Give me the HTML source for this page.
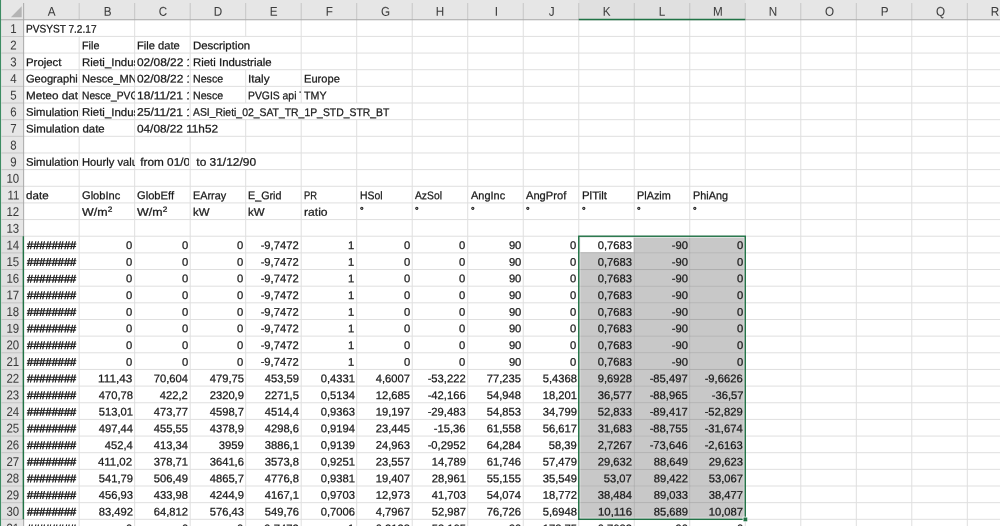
<!DOCTYPE html>
<html><head><meta charset="utf-8"><title>sheet</title>
<style>
html,body{margin:0;padding:0;background:#fff}
body{width:1000px;height:526px;overflow:hidden;position:relative;font-family:"Liberation Sans",sans-serif;font-size:11.1px;color:#181818;-webkit-text-stroke:0.25px #181818}
#g{position:absolute;left:0;top:0}
#t{position:absolute;left:0;top:0;width:1000px;height:526px;overflow:hidden;filter:blur(0.35px)}
.c{position:absolute;height:21px;line-height:17px;box-sizing:border-box;padding:0 2.2px 0 3.2px;white-space:pre;overflow:hidden}
.c span{display:inline-block;transform-origin:0 50%}
.c b{font-weight:normal;font-size:7.4px;position:relative;top:-3.6px;left:0.3px}
.r{text-align:right}
.r span{transform-origin:100% 50%}
.ch{position:absolute;top:0;height:20px;line-height:20px;text-align:center;color:#3c3c3c;font-size:12.7px;-webkit-text-stroke:0.05px #3c3c3c}
.rh{position:absolute;left:0;width:23.65px;height:21px;line-height:17px;text-align:center;color:#3c3c3c;font-size:12.7px;-webkit-text-stroke:0.05px #3c3c3c;padding-left:0.8px;box-sizing:border-box}
.ch span,.rh span{display:inline-block}
</style></head><body>
<svg id="g" width="1000" height="526" viewBox="0 0 1000 526">
<rect x="0" y="0" width="1000" height="19.75" fill="#e6e6e6"/>
<rect x="0" y="0" width="23.65" height="526" fill="#e6e6e6"/>
<rect x="578.75" y="0" width="166.53" height="19.75" fill="#e0e0e0"/>
<rect x="0" y="236.23" width="23.65" height="283.08" fill="#e0e0e0"/>
<rect x="578.75" y="236.23" width="166.53" height="283.08" fill="#c8c8c8"/>
<rect x="580.15" y="237.63" width="53.71" height="14.85" fill="#fff"/>
<line x1="23.65" y1="36.40" x2="1000" y2="36.40" stroke="#dfdfdf"/>
<line x1="23.65" y1="53.05" x2="1000" y2="53.05" stroke="#dfdfdf"/>
<line x1="23.65" y1="69.71" x2="1000" y2="69.71" stroke="#dfdfdf"/>
<line x1="23.65" y1="86.36" x2="1000" y2="86.36" stroke="#dfdfdf"/>
<line x1="23.65" y1="103.01" x2="1000" y2="103.01" stroke="#dfdfdf"/>
<line x1="23.65" y1="119.66" x2="1000" y2="119.66" stroke="#dfdfdf"/>
<line x1="23.65" y1="136.31" x2="1000" y2="136.31" stroke="#dfdfdf"/>
<line x1="23.65" y1="152.97" x2="1000" y2="152.97" stroke="#dfdfdf"/>
<line x1="23.65" y1="169.62" x2="1000" y2="169.62" stroke="#dfdfdf"/>
<line x1="23.65" y1="186.27" x2="1000" y2="186.27" stroke="#dfdfdf"/>
<line x1="23.65" y1="202.92" x2="1000" y2="202.92" stroke="#dfdfdf"/>
<line x1="23.65" y1="219.57" x2="1000" y2="219.57" stroke="#dfdfdf"/>
<line x1="23.65" y1="236.23" x2="1000" y2="236.23" stroke="#dfdfdf"/>
<line x1="23.65" y1="252.88" x2="1000" y2="252.88" stroke="#dfdfdf"/>
<line x1="23.65" y1="269.53" x2="1000" y2="269.53" stroke="#dfdfdf"/>
<line x1="23.65" y1="286.18" x2="1000" y2="286.18" stroke="#dfdfdf"/>
<line x1="23.65" y1="302.83" x2="1000" y2="302.83" stroke="#dfdfdf"/>
<line x1="23.65" y1="319.49" x2="1000" y2="319.49" stroke="#dfdfdf"/>
<line x1="23.65" y1="336.14" x2="1000" y2="336.14" stroke="#dfdfdf"/>
<line x1="23.65" y1="352.79" x2="1000" y2="352.79" stroke="#dfdfdf"/>
<line x1="23.65" y1="369.44" x2="1000" y2="369.44" stroke="#dfdfdf"/>
<line x1="23.65" y1="386.09" x2="1000" y2="386.09" stroke="#dfdfdf"/>
<line x1="23.65" y1="402.75" x2="1000" y2="402.75" stroke="#dfdfdf"/>
<line x1="23.65" y1="419.40" x2="1000" y2="419.40" stroke="#dfdfdf"/>
<line x1="23.65" y1="436.05" x2="1000" y2="436.05" stroke="#dfdfdf"/>
<line x1="23.65" y1="452.70" x2="1000" y2="452.70" stroke="#dfdfdf"/>
<line x1="23.65" y1="469.35" x2="1000" y2="469.35" stroke="#dfdfdf"/>
<line x1="23.65" y1="486.01" x2="1000" y2="486.01" stroke="#dfdfdf"/>
<line x1="23.65" y1="502.66" x2="1000" y2="502.66" stroke="#dfdfdf"/>
<line x1="23.65" y1="519.31" x2="1000" y2="519.31" stroke="#dfdfdf"/>
<line x1="79.16" y1="36.40" x2="79.16" y2="119.66" stroke="#dfdfdf"/>
<line x1="79.16" y1="136.31" x2="79.16" y2="526.00" stroke="#dfdfdf"/>
<line x1="134.67" y1="19.75" x2="134.67" y2="526.00" stroke="#dfdfdf"/>
<line x1="190.18" y1="19.75" x2="190.18" y2="119.66" stroke="#dfdfdf"/>
<line x1="190.18" y1="136.31" x2="190.18" y2="526.00" stroke="#dfdfdf"/>
<line x1="245.69" y1="19.75" x2="245.69" y2="36.40" stroke="#dfdfdf"/>
<line x1="245.69" y1="69.71" x2="245.69" y2="103.01" stroke="#dfdfdf"/>
<line x1="245.69" y1="119.66" x2="245.69" y2="152.97" stroke="#dfdfdf"/>
<line x1="245.69" y1="169.62" x2="245.69" y2="526.00" stroke="#dfdfdf"/>
<line x1="301.20" y1="19.75" x2="301.20" y2="103.01" stroke="#dfdfdf"/>
<line x1="301.20" y1="119.66" x2="301.20" y2="526.00" stroke="#dfdfdf"/>
<line x1="356.71" y1="19.75" x2="356.71" y2="103.01" stroke="#dfdfdf"/>
<line x1="356.71" y1="119.66" x2="356.71" y2="526.00" stroke="#dfdfdf"/>
<line x1="412.22" y1="19.75" x2="412.22" y2="526.00" stroke="#dfdfdf"/>
<line x1="467.73" y1="19.75" x2="467.73" y2="526.00" stroke="#dfdfdf"/>
<line x1="523.24" y1="19.75" x2="523.24" y2="526.00" stroke="#dfdfdf"/>
<line x1="578.75" y1="19.75" x2="578.75" y2="526.00" stroke="#dfdfdf"/>
<line x1="634.26" y1="19.75" x2="634.26" y2="526.00" stroke="#dfdfdf"/>
<line x1="689.77" y1="19.75" x2="689.77" y2="526.00" stroke="#dfdfdf"/>
<line x1="745.28" y1="19.75" x2="745.28" y2="526.00" stroke="#dfdfdf"/>
<line x1="800.79" y1="19.75" x2="800.79" y2="526.00" stroke="#dfdfdf"/>
<line x1="856.30" y1="19.75" x2="856.30" y2="526.00" stroke="#dfdfdf"/>
<line x1="911.81" y1="19.75" x2="911.81" y2="526.00" stroke="#dfdfdf"/>
<line x1="967.32" y1="19.75" x2="967.32" y2="526.00" stroke="#dfdfdf"/>
<line x1="578.75" y1="252.88" x2="745.28" y2="252.88" stroke="#adadad"/>
<line x1="578.75" y1="269.53" x2="745.28" y2="269.53" stroke="#adadad"/>
<line x1="578.75" y1="286.18" x2="745.28" y2="286.18" stroke="#adadad"/>
<line x1="578.75" y1="302.83" x2="745.28" y2="302.83" stroke="#adadad"/>
<line x1="578.75" y1="319.49" x2="745.28" y2="319.49" stroke="#adadad"/>
<line x1="578.75" y1="336.14" x2="745.28" y2="336.14" stroke="#adadad"/>
<line x1="578.75" y1="352.79" x2="745.28" y2="352.79" stroke="#adadad"/>
<line x1="578.75" y1="369.44" x2="745.28" y2="369.44" stroke="#adadad"/>
<line x1="578.75" y1="386.09" x2="745.28" y2="386.09" stroke="#adadad"/>
<line x1="578.75" y1="402.75" x2="745.28" y2="402.75" stroke="#adadad"/>
<line x1="578.75" y1="419.40" x2="745.28" y2="419.40" stroke="#adadad"/>
<line x1="578.75" y1="436.05" x2="745.28" y2="436.05" stroke="#adadad"/>
<line x1="578.75" y1="452.70" x2="745.28" y2="452.70" stroke="#adadad"/>
<line x1="578.75" y1="469.35" x2="745.28" y2="469.35" stroke="#adadad"/>
<line x1="578.75" y1="486.01" x2="745.28" y2="486.01" stroke="#adadad"/>
<line x1="578.75" y1="502.66" x2="745.28" y2="502.66" stroke="#adadad"/>
<line x1="634.26" y1="236.23" x2="634.26" y2="519.31" stroke="#adadad"/>
<line x1="689.77" y1="236.23" x2="689.77" y2="519.31" stroke="#adadad"/>
<line x1="79.16" y1="3" x2="79.16" y2="19.75" stroke="#b0b0b0" stroke-width="0.8" opacity="0.75"/>
<line x1="134.67" y1="3" x2="134.67" y2="19.75" stroke="#b0b0b0" stroke-width="0.8" opacity="0.75"/>
<line x1="190.18" y1="3" x2="190.18" y2="19.75" stroke="#b0b0b0" stroke-width="0.8" opacity="0.75"/>
<line x1="245.69" y1="3" x2="245.69" y2="19.75" stroke="#b0b0b0" stroke-width="0.8" opacity="0.75"/>
<line x1="301.20" y1="3" x2="301.20" y2="19.75" stroke="#b0b0b0" stroke-width="0.8" opacity="0.75"/>
<line x1="356.71" y1="3" x2="356.71" y2="19.75" stroke="#b0b0b0" stroke-width="0.8" opacity="0.75"/>
<line x1="412.22" y1="3" x2="412.22" y2="19.75" stroke="#b0b0b0" stroke-width="0.8" opacity="0.75"/>
<line x1="467.73" y1="3" x2="467.73" y2="19.75" stroke="#b0b0b0" stroke-width="0.8" opacity="0.75"/>
<line x1="523.24" y1="3" x2="523.24" y2="19.75" stroke="#b0b0b0" stroke-width="0.8" opacity="0.75"/>
<line x1="578.75" y1="3" x2="578.75" y2="19.75" stroke="#b0b0b0" stroke-width="0.8" opacity="0.75"/>
<line x1="634.26" y1="3" x2="634.26" y2="19.75" stroke="#b0b0b0" stroke-width="0.8" opacity="0.75"/>
<line x1="689.77" y1="3" x2="689.77" y2="19.75" stroke="#b0b0b0" stroke-width="0.8" opacity="0.75"/>
<line x1="745.28" y1="3" x2="745.28" y2="19.75" stroke="#b0b0b0" stroke-width="0.8" opacity="0.75"/>
<line x1="800.79" y1="3" x2="800.79" y2="19.75" stroke="#b0b0b0" stroke-width="0.8" opacity="0.75"/>
<line x1="856.30" y1="3" x2="856.30" y2="19.75" stroke="#b0b0b0" stroke-width="0.8" opacity="0.75"/>
<line x1="911.81" y1="3" x2="911.81" y2="19.75" stroke="#b0b0b0" stroke-width="0.8" opacity="0.75"/>
<line x1="967.32" y1="3" x2="967.32" y2="19.75" stroke="#b0b0b0" stroke-width="0.8" opacity="0.75"/>
<line x1="1.5" y1="36.40" x2="23.65" y2="36.40" stroke="#b0b0b0" stroke-width="0.8" opacity="0.75"/>
<line x1="1.5" y1="53.05" x2="23.65" y2="53.05" stroke="#b0b0b0" stroke-width="0.8" opacity="0.75"/>
<line x1="1.5" y1="69.71" x2="23.65" y2="69.71" stroke="#b0b0b0" stroke-width="0.8" opacity="0.75"/>
<line x1="1.5" y1="86.36" x2="23.65" y2="86.36" stroke="#b0b0b0" stroke-width="0.8" opacity="0.75"/>
<line x1="1.5" y1="103.01" x2="23.65" y2="103.01" stroke="#b0b0b0" stroke-width="0.8" opacity="0.75"/>
<line x1="1.5" y1="119.66" x2="23.65" y2="119.66" stroke="#b0b0b0" stroke-width="0.8" opacity="0.75"/>
<line x1="1.5" y1="136.31" x2="23.65" y2="136.31" stroke="#b0b0b0" stroke-width="0.8" opacity="0.75"/>
<line x1="1.5" y1="152.97" x2="23.65" y2="152.97" stroke="#b0b0b0" stroke-width="0.8" opacity="0.75"/>
<line x1="1.5" y1="169.62" x2="23.65" y2="169.62" stroke="#b0b0b0" stroke-width="0.8" opacity="0.75"/>
<line x1="1.5" y1="186.27" x2="23.65" y2="186.27" stroke="#b0b0b0" stroke-width="0.8" opacity="0.75"/>
<line x1="1.5" y1="202.92" x2="23.65" y2="202.92" stroke="#b0b0b0" stroke-width="0.8" opacity="0.75"/>
<line x1="1.5" y1="219.57" x2="23.65" y2="219.57" stroke="#b0b0b0" stroke-width="0.8" opacity="0.75"/>
<line x1="1.5" y1="236.23" x2="23.65" y2="236.23" stroke="#b0b0b0" stroke-width="0.8" opacity="0.75"/>
<line x1="1.5" y1="252.88" x2="23.65" y2="252.88" stroke="#b0b0b0" stroke-width="0.8" opacity="0.75"/>
<line x1="1.5" y1="269.53" x2="23.65" y2="269.53" stroke="#b0b0b0" stroke-width="0.8" opacity="0.75"/>
<line x1="1.5" y1="286.18" x2="23.65" y2="286.18" stroke="#b0b0b0" stroke-width="0.8" opacity="0.75"/>
<line x1="1.5" y1="302.83" x2="23.65" y2="302.83" stroke="#b0b0b0" stroke-width="0.8" opacity="0.75"/>
<line x1="1.5" y1="319.49" x2="23.65" y2="319.49" stroke="#b0b0b0" stroke-width="0.8" opacity="0.75"/>
<line x1="1.5" y1="336.14" x2="23.65" y2="336.14" stroke="#b0b0b0" stroke-width="0.8" opacity="0.75"/>
<line x1="1.5" y1="352.79" x2="23.65" y2="352.79" stroke="#b0b0b0" stroke-width="0.8" opacity="0.75"/>
<line x1="1.5" y1="369.44" x2="23.65" y2="369.44" stroke="#b0b0b0" stroke-width="0.8" opacity="0.75"/>
<line x1="1.5" y1="386.09" x2="23.65" y2="386.09" stroke="#b0b0b0" stroke-width="0.8" opacity="0.75"/>
<line x1="1.5" y1="402.75" x2="23.65" y2="402.75" stroke="#b0b0b0" stroke-width="0.8" opacity="0.75"/>
<line x1="1.5" y1="419.40" x2="23.65" y2="419.40" stroke="#b0b0b0" stroke-width="0.8" opacity="0.75"/>
<line x1="1.5" y1="436.05" x2="23.65" y2="436.05" stroke="#b0b0b0" stroke-width="0.8" opacity="0.75"/>
<line x1="1.5" y1="452.70" x2="23.65" y2="452.70" stroke="#b0b0b0" stroke-width="0.8" opacity="0.75"/>
<line x1="1.5" y1="469.35" x2="23.65" y2="469.35" stroke="#b0b0b0" stroke-width="0.8" opacity="0.75"/>
<line x1="1.5" y1="486.01" x2="23.65" y2="486.01" stroke="#b0b0b0" stroke-width="0.8" opacity="0.75"/>
<line x1="1.5" y1="502.66" x2="23.65" y2="502.66" stroke="#b0b0b0" stroke-width="0.8" opacity="0.75"/>
<line x1="1.5" y1="519.31" x2="23.65" y2="519.31" stroke="#b0b0b0" stroke-width="0.8" opacity="0.75"/>
<line x1="0" y1="19.75" x2="1000" y2="19.75" stroke="#a8a8a8"/>
<line x1="23.65" y1="3" x2="23.65" y2="526" stroke="#a8a8a8"/>
<line x1="578.75" y1="19.45" x2="745.28" y2="19.45" stroke="#217346" stroke-width="1.4"/>
<line x1="23.349999999999998" y1="236.23" x2="23.349999999999998" y2="519.31" stroke="#217346" stroke-width="1.4"/>
<rect x="579.95" y="237.43" width="164.13" height="280.68" fill="none" stroke="#fff" stroke-width="0.6" opacity="0.8"/>
<rect x="578.75" y="236.23" width="166.53" height="283.08" fill="none" stroke="#217346" stroke-width="1.4"/>
<rect x="742.68" y="516.71" width="5.2" height="5.2" fill="#fff"/>
<rect x="743.48" y="517.51" width="3.8" height="3.8" fill="#217346"/>
<polygon points="21.7,6.2 21.7,17.3 10.9,17.3" fill="#b4b4b4"/>
<rect x="0" y="0" width="1.05" height="526" fill="#3d8c63"/>
</svg>
<div id="t">
<div class="ch" style="left:23.65px;width:55.51px"><span style="transform:translate(0.5px,1.80px) rotate(0.05deg) scaleX(0.92)">A</span></div>
<div class="ch" style="left:79.16px;width:55.51px"><span style="transform:translate(0.5px,1.80px) rotate(0.05deg) scaleX(0.92)">B</span></div>
<div class="ch" style="left:134.67px;width:55.51px"><span style="transform:translate(0.5px,1.80px) rotate(0.05deg) scaleX(0.92)">C</span></div>
<div class="ch" style="left:190.18px;width:55.51px"><span style="transform:translate(0.5px,1.80px) rotate(0.05deg) scaleX(0.92)">D</span></div>
<div class="ch" style="left:245.69px;width:55.51px"><span style="transform:translate(0.5px,1.80px) rotate(0.05deg) scaleX(0.92)">E</span></div>
<div class="ch" style="left:301.20px;width:55.51px"><span style="transform:translate(0.5px,1.80px) rotate(0.05deg) scaleX(0.92)">F</span></div>
<div class="ch" style="left:356.71px;width:55.51px"><span style="transform:translate(0.5px,1.80px) rotate(0.05deg) scaleX(0.92)">G</span></div>
<div class="ch" style="left:412.22px;width:55.51px"><span style="transform:translate(0.5px,1.80px) rotate(0.05deg) scaleX(0.92)">H</span></div>
<div class="ch" style="left:467.73px;width:55.51px"><span style="transform:translate(0.5px,1.80px) rotate(0.05deg) scaleX(0.92)">I</span></div>
<div class="ch" style="left:523.24px;width:55.51px"><span style="transform:translate(0.5px,1.80px) rotate(0.05deg) scaleX(0.92)">J</span></div>
<div class="ch" style="left:578.75px;width:55.51px"><span style="transform:translate(0.5px,1.80px) rotate(0.05deg) scaleX(0.92)">K</span></div>
<div class="ch" style="left:634.26px;width:55.51px"><span style="transform:translate(0.5px,1.80px) rotate(0.05deg) scaleX(0.92)">L</span></div>
<div class="ch" style="left:689.77px;width:55.51px"><span style="transform:translate(0.5px,1.80px) rotate(0.05deg) scaleX(0.92)">M</span></div>
<div class="ch" style="left:745.28px;width:55.51px"><span style="transform:translate(0.5px,1.80px) rotate(0.05deg) scaleX(0.92)">N</span></div>
<div class="ch" style="left:800.79px;width:55.51px"><span style="transform:translate(0.5px,1.80px) rotate(0.05deg) scaleX(0.92)">O</span></div>
<div class="ch" style="left:856.30px;width:55.51px"><span style="transform:translate(0.5px,1.80px) rotate(0.05deg) scaleX(0.92)">P</span></div>
<div class="ch" style="left:911.81px;width:55.51px"><span style="transform:translate(0.5px,1.80px) rotate(0.05deg) scaleX(0.92)">Q</span></div>
<div class="ch" style="left:967.32px;width:55.51px"><span style="transform:translate(0.5px,1.80px) rotate(0.05deg) scaleX(0.92)">R</span></div>
<div class="rh" style="top:19px"><span style="transform:translate(0.8px,1.95px) rotate(0.05deg) scaleX(0.9)">1</span></div>
<div class="rh" style="top:36px"><span style="transform:translate(0.8px,1.60px) rotate(0.05deg) scaleX(0.9)">2</span></div>
<div class="rh" style="top:53px"><span style="transform:translate(0.8px,1.25px) rotate(0.05deg) scaleX(0.9)">3</span></div>
<div class="rh" style="top:69px"><span style="transform:translate(0.8px,1.91px) rotate(0.05deg) scaleX(0.9)">4</span></div>
<div class="rh" style="top:86px"><span style="transform:translate(0.8px,1.56px) rotate(0.05deg) scaleX(0.9)">5</span></div>
<div class="rh" style="top:103px"><span style="transform:translate(0.8px,1.21px) rotate(0.05deg) scaleX(0.9)">6</span></div>
<div class="rh" style="top:119px"><span style="transform:translate(0.8px,1.86px) rotate(0.05deg) scaleX(0.9)">7</span></div>
<div class="rh" style="top:136px"><span style="transform:translate(0.8px,1.51px) rotate(0.05deg) scaleX(0.9)">8</span></div>
<div class="rh" style="top:152px"><span style="transform:translate(0.8px,2.17px) rotate(0.05deg) scaleX(0.9)">9</span></div>
<div class="rh" style="top:169px"><span style="transform:translate(0.8px,1.82px) rotate(0.05deg) scaleX(0.9)">10</span></div>
<div class="rh" style="top:186px"><span style="transform:translate(0.8px,1.47px) rotate(0.05deg) scaleX(0.9)">11</span></div>
<div class="rh" style="top:202px"><span style="transform:translate(0.8px,2.12px) rotate(0.05deg) scaleX(0.9)">12</span></div>
<div class="rh" style="top:219px"><span style="transform:translate(0.8px,1.77px) rotate(0.05deg) scaleX(0.9)">13</span></div>
<div class="rh" style="top:236px"><span style="transform:translate(0.8px,1.43px) rotate(0.05deg) scaleX(0.9)">14</span></div>
<div class="rh" style="top:252px"><span style="transform:translate(0.8px,2.08px) rotate(0.05deg) scaleX(0.9)">15</span></div>
<div class="rh" style="top:269px"><span style="transform:translate(0.8px,1.73px) rotate(0.05deg) scaleX(0.9)">16</span></div>
<div class="rh" style="top:286px"><span style="transform:translate(0.8px,1.38px) rotate(0.05deg) scaleX(0.9)">17</span></div>
<div class="rh" style="top:302px"><span style="transform:translate(0.8px,2.03px) rotate(0.05deg) scaleX(0.9)">18</span></div>
<div class="rh" style="top:319px"><span style="transform:translate(0.8px,1.69px) rotate(0.05deg) scaleX(0.9)">19</span></div>
<div class="rh" style="top:336px"><span style="transform:translate(0.8px,1.34px) rotate(0.05deg) scaleX(0.9)">20</span></div>
<div class="rh" style="top:352px"><span style="transform:translate(0.8px,1.99px) rotate(0.05deg) scaleX(0.9)">21</span></div>
<div class="rh" style="top:369px"><span style="transform:translate(0.8px,1.64px) rotate(0.05deg) scaleX(0.9)">22</span></div>
<div class="rh" style="top:386px"><span style="transform:translate(0.8px,1.29px) rotate(0.05deg) scaleX(0.9)">23</span></div>
<div class="rh" style="top:402px"><span style="transform:translate(0.8px,1.95px) rotate(0.05deg) scaleX(0.9)">24</span></div>
<div class="rh" style="top:419px"><span style="transform:translate(0.8px,1.60px) rotate(0.05deg) scaleX(0.9)">25</span></div>
<div class="rh" style="top:436px"><span style="transform:translate(0.8px,1.25px) rotate(0.05deg) scaleX(0.9)">26</span></div>
<div class="rh" style="top:452px"><span style="transform:translate(0.8px,1.90px) rotate(0.05deg) scaleX(0.9)">27</span></div>
<div class="rh" style="top:469px"><span style="transform:translate(0.8px,1.55px) rotate(0.05deg) scaleX(0.9)">28</span></div>
<div class="rh" style="top:486px"><span style="transform:translate(0.8px,1.21px) rotate(0.05deg) scaleX(0.9)">29</span></div>
<div class="rh" style="top:502px"><span style="transform:translate(0.8px,1.86px) rotate(0.05deg) scaleX(0.9)">30</span></div>
<div class="rh" style="top:519px"><span style="transform:translate(0.8px,1.51px) rotate(0.05deg) scaleX(0.9)">31</span></div>
<div class="c" style="left:23.05px;top:19px;width:111.02px"><span style="transform:translateY(1.60px) rotate(0.05deg) scaleX(0.9098)">PVSYST 7.2.17</span></div>
<div class="c" style="left:79.16px;top:36px;width:55.51px"><span style="transform:translateY(1.25px) rotate(0.05deg) scaleX(0.9738)">File</span></div>
<div class="c" style="left:134.07px;top:36px;width:54.81px"><span style="transform:translateY(1.25px) rotate(0.05deg) scaleX(1.0051)">File date</span></div>
<div class="c" style="left:190.18px;top:36px;width:111.02px"><span style="transform:translateY(1.25px) rotate(0.05deg) scaleX(1.0296)">Description</span></div>
<div class="c" style="left:23.05px;top:53px;width:55.11px"><span style="transform:translateY(0.90px) rotate(0.05deg) scaleX(1.0280)">Project</span></div>
<div class="c" style="left:79.16px;top:53px;width:55.51px"><span style="transform:translateY(0.90px) rotate(0.05deg) scaleX(1.0309)">Rieti_Industriale</span></div>
<div class="c" style="left:134.07px;top:53px;width:54.81px"><span style="transform:translateY(0.90px) rotate(0.05deg) scaleX(1.0723)">02/08/22 11h</span></div>
<div class="c" style="left:190.18px;top:53px;width:111.02px"><span style="transform:translateY(0.90px) rotate(0.05deg) scaleX(1.0288)">Rieti Industriale</span></div>
<div class="c" style="left:23.05px;top:69px;width:55.11px"><span style="transform:translateY(1.56px) rotate(0.05deg) scaleX(0.9996)">Geographical</span></div>
<div class="c" style="left:79.16px;top:69px;width:55.51px"><span style="transform:translateY(1.56px) rotate(0.05deg) scaleX(0.9999)">Nesce_MN72</span></div>
<div class="c" style="left:134.07px;top:69px;width:54.81px"><span style="transform:translateY(1.56px) rotate(0.05deg) scaleX(1.0723)">02/08/22 11h</span></div>
<div class="c" style="left:190.18px;top:69px;width:55.51px"><span style="transform:translateY(1.56px) rotate(0.05deg) scaleX(0.9596)">Nesce</span></div>
<div class="c" style="left:245.19px;top:69px;width:55.51px"><span style="transform:translateY(1.56px) rotate(0.05deg) scaleX(1.0562)">Italy</span></div>
<div class="c" style="left:301.20px;top:69px;width:55.51px"><span style="transform:translateY(1.56px) rotate(0.05deg) scaleX(1.0009)">Europe</span></div>
<div class="c" style="left:23.05px;top:86px;width:55.11px"><span style="transform:translateY(1.21px) rotate(0.05deg) scaleX(1.0535)">Meteo data</span></div>
<div class="c" style="left:79.16px;top:86px;width:55.51px"><span style="transform:translateY(1.21px) rotate(0.05deg) scaleX(0.9245)">Nesce_PVGIS</span></div>
<div class="c" style="left:134.07px;top:86px;width:54.81px"><span style="transform:translateY(1.21px) rotate(0.05deg) scaleX(1.0863)">18/11/21 11h</span></div>
<div class="c" style="left:190.18px;top:86px;width:55.51px"><span style="transform:translateY(1.21px) rotate(0.05deg) scaleX(0.9596)">Nesce</span></div>
<div class="c" style="left:245.19px;top:86px;width:55.51px"><span style="transform:translateY(1.21px) rotate(0.05deg) scaleX(0.9353)">PVGIS api TMY</span></div>
<div class="c" style="left:301.20px;top:86px;width:55.51px"><span style="transform:translateY(1.21px) rotate(0.05deg) scaleX(0.9605)">TMY</span></div>
<div class="c" style="left:23.05px;top:103px;width:55.11px"><span style="transform:translateY(0.86px) rotate(0.05deg) scaleX(1.0206)">Simulation v</span></div>
<div class="c" style="left:79.16px;top:103px;width:55.51px"><span style="transform:translateY(0.86px) rotate(0.05deg) scaleX(1.0309)">Rieti_Industriale</span></div>
<div class="c" style="left:134.07px;top:103px;width:54.81px"><span style="transform:translateY(0.86px) rotate(0.05deg) scaleX(1.0863)">25/11/21 11h</span></div>
<div class="c" style="left:190.18px;top:103px;width:222.04px"><span style="transform:translateY(0.86px) rotate(0.05deg) scaleX(0.9376)">ASI_Rieti_02_SAT_TR_1P_STD_STR_BT</span></div>
<div class="c" style="left:23.05px;top:119px;width:111.02px"><span style="transform:translateY(1.51px) rotate(0.05deg) scaleX(1.0291)">Simulation date</span></div>
<div class="c" style="left:134.07px;top:119px;width:111.02px"><span style="transform:translateY(1.51px) rotate(0.05deg) scaleX(1.0622)">04/08/22 11h52</span></div>
<div class="c" style="left:23.05px;top:152px;width:55.11px"><span style="transform:translateY(1.82px) rotate(0.05deg) scaleX(1.0206)">Simulation v</span></div>
<div class="c" style="left:79.16px;top:152px;width:55.51px"><span style="transform:translateY(1.82px) rotate(0.05deg) scaleX(1.0073)">Hourly values</span></div>
<div class="c" style="left:134.07px;top:152px;width:54.81px"><span style="transform:translateY(1.82px) rotate(0.05deg) scaleX(1.0616)"> from 01/01</span></div>
<div class="c" style="left:190.18px;top:152px;width:111.02px"><span style="transform:translateY(1.82px) rotate(0.05deg) scaleX(1.0757)"> to 31/12/90</span></div>
<div class="c" style="left:23.05px;top:186px;width:55.11px"><span style="transform:translateY(1.12px) rotate(0.05deg) scaleX(1.0458)">date</span></div>
<div class="c" style="left:79.16px;top:186px;width:55.51px"><span style="transform:translateY(1.12px) rotate(0.05deg) scaleX(1.0010)">GlobInc</span></div>
<div class="c" style="left:134.07px;top:186px;width:54.81px"><span style="transform:translateY(1.12px) rotate(0.05deg) scaleX(1.0062)">GlobEff</span></div>
<div class="c" style="left:190.18px;top:186px;width:55.51px"><span style="transform:translateY(1.12px) rotate(0.05deg) scaleX(0.9774)">EArray</span></div>
<div class="c" style="left:245.19px;top:186px;width:55.51px"><span style="transform:translateY(1.12px) rotate(0.05deg) scaleX(0.9687)">E_Grid</span></div>
<div class="c" style="left:301.20px;top:186px;width:55.51px"><span style="transform:translateY(1.12px) rotate(0.05deg) scaleX(0.8452)">PR</span></div>
<div class="c" style="left:356.71px;top:186px;width:55.51px"><span style="transform:translateY(1.12px) rotate(0.05deg) scaleX(0.9403)">HSol</span></div>
<div class="c" style="left:412.22px;top:186px;width:55.51px"><span style="transform:translateY(1.12px) rotate(0.05deg) scaleX(0.9289)">AzSol</span></div>
<div class="c" style="left:467.73px;top:186px;width:55.51px"><span style="transform:translateY(1.12px) rotate(0.05deg) scaleX(0.9877)">AngInc</span></div>
<div class="c" style="left:523.24px;top:186px;width:55.51px"><span style="transform:translateY(1.12px) rotate(0.05deg) scaleX(1.0036)">AngProf</span></div>
<div class="c" style="left:578.75px;top:186px;width:55.51px"><span style="transform:translateY(1.12px) rotate(0.05deg) scaleX(1.0281)">PlTilt</span></div>
<div class="c" style="left:634.26px;top:186px;width:55.51px"><span style="transform:translateY(1.12px) rotate(0.05deg) scaleX(0.9787)">PlAzim</span></div>
<div class="c" style="left:689.77px;top:186px;width:55.51px"><span style="transform:translateY(1.12px) rotate(0.05deg) scaleX(0.9781)">PhiAng</span></div>
<div class="c" style="left:79.16px;top:202px;width:55.51px"><span style="transform:translateY(1.77px) rotate(0.05deg) scaleX(1.1188)">W/m<b>2</b></span></div>
<div class="c" style="left:134.07px;top:202px;width:54.81px"><span style="transform:translateY(1.77px) rotate(0.05deg) scaleX(1.1188)">W/m<b>2</b></span></div>
<div class="c" style="left:190.18px;top:202px;width:55.51px"><span style="transform:translateY(1.77px) rotate(0.05deg) scaleX(1.0317)">kW</span></div>
<div class="c" style="left:245.19px;top:202px;width:55.51px"><span style="transform:translateY(1.77px) rotate(0.05deg) scaleX(1.0317)">kW</span></div>
<div class="c" style="left:301.20px;top:202px;width:55.51px"><span style="transform:translateY(1.77px) rotate(0.05deg) scaleX(1.0934)">ratio</span></div>
<div class="c" style="left:356.71px;top:202px;width:55.51px"><span style="font-size:9.2px;-webkit-text-stroke:0.55px #2a2a2a;transform:translate(0.1px,-0.53px) rotate(0.05deg)">°</span></div>
<div class="c" style="left:412.22px;top:202px;width:55.51px"><span style="font-size:9.2px;-webkit-text-stroke:0.55px #2a2a2a;transform:translate(0.1px,-0.53px) rotate(0.05deg)">°</span></div>
<div class="c" style="left:467.73px;top:202px;width:55.51px"><span style="font-size:9.2px;-webkit-text-stroke:0.55px #2a2a2a;transform:translate(0.1px,-0.53px) rotate(0.05deg)">°</span></div>
<div class="c" style="left:523.24px;top:202px;width:55.51px"><span style="font-size:9.2px;-webkit-text-stroke:0.55px #2a2a2a;transform:translate(0.1px,-0.53px) rotate(0.05deg)">°</span></div>
<div class="c" style="left:578.75px;top:202px;width:55.51px"><span style="font-size:9.2px;-webkit-text-stroke:0.55px #2a2a2a;transform:translate(0.1px,-0.53px) rotate(0.05deg)">°</span></div>
<div class="c" style="left:634.26px;top:202px;width:55.51px"><span style="font-size:9.2px;-webkit-text-stroke:0.55px #2a2a2a;transform:translate(0.1px,-0.53px) rotate(0.05deg)">°</span></div>
<div class="c" style="left:689.77px;top:202px;width:55.51px"><span style="font-size:9.2px;-webkit-text-stroke:0.55px #2a2a2a;transform:translate(0.1px,-0.53px) rotate(0.05deg)">°</span></div>
<div class="c" style="left:24.15px;top:236px;width:55.11px"><span style="transform:translateY(1.08px) rotate(0.05deg) scaleX(0.9983);-webkit-text-stroke:0.45px #181818">########</span></div>
<div class="c r" style="left:79.16px;top:236px;width:55.51px"><span style="transform:translateY(1.08px) rotate(0.05deg) scaleX(1.0098)">0</span></div>
<div class="c r" style="left:134.67px;top:236px;width:55.51px"><span style="transform:translateY(1.08px) rotate(0.05deg) scaleX(1.0098)">0</span></div>
<div class="c r" style="left:190.18px;top:236px;width:55.51px"><span style="transform:translateY(1.08px) rotate(0.05deg) scaleX(1.0098)">0</span></div>
<div class="c r" style="left:245.69px;top:236px;width:55.51px"><span style="transform:translateY(1.08px) rotate(0.05deg) scaleX(1.0095)">-9,7472</span></div>
<div class="c r" style="left:301.20px;top:236px;width:55.51px"><span style="transform:translateY(1.08px) rotate(0.05deg) scaleX(1.0098)">1</span></div>
<div class="c r" style="left:356.71px;top:236px;width:55.51px"><span style="transform:translateY(1.08px) rotate(0.05deg) scaleX(1.0098)">0</span></div>
<div class="c r" style="left:412.22px;top:236px;width:55.51px"><span style="transform:translateY(1.08px) rotate(0.05deg) scaleX(1.0098)">0</span></div>
<div class="c r" style="left:467.73px;top:236px;width:55.51px"><span style="transform:translateY(1.08px) rotate(0.05deg) scaleX(1.0098)">90</span></div>
<div class="c r" style="left:523.24px;top:236px;width:55.51px"><span style="transform:translateY(1.08px) rotate(0.05deg) scaleX(1.0098)">0</span></div>
<div class="c r" style="left:578.75px;top:236px;width:55.51px"><span style="transform:translateY(1.08px) rotate(0.05deg) scaleX(1.0085)">0,7683</span></div>
<div class="c r" style="left:634.26px;top:236px;width:55.51px"><span style="transform:translateY(1.08px) rotate(0.05deg) scaleX(1.0119)">-90</span></div>
<div class="c r" style="left:689.77px;top:236px;width:55.51px"><span style="transform:translateY(1.08px) rotate(0.05deg) scaleX(1.0098)">0</span></div>
<div class="c" style="left:24.15px;top:252px;width:55.11px"><span style="transform:translateY(1.73px) rotate(0.05deg) scaleX(0.9983);-webkit-text-stroke:0.45px #181818">########</span></div>
<div class="c r" style="left:79.16px;top:252px;width:55.51px"><span style="transform:translateY(1.73px) rotate(0.05deg) scaleX(1.0098)">0</span></div>
<div class="c r" style="left:134.67px;top:252px;width:55.51px"><span style="transform:translateY(1.73px) rotate(0.05deg) scaleX(1.0098)">0</span></div>
<div class="c r" style="left:190.18px;top:252px;width:55.51px"><span style="transform:translateY(1.73px) rotate(0.05deg) scaleX(1.0098)">0</span></div>
<div class="c r" style="left:245.69px;top:252px;width:55.51px"><span style="transform:translateY(1.73px) rotate(0.05deg) scaleX(1.0095)">-9,7472</span></div>
<div class="c r" style="left:301.20px;top:252px;width:55.51px"><span style="transform:translateY(1.73px) rotate(0.05deg) scaleX(1.0098)">1</span></div>
<div class="c r" style="left:356.71px;top:252px;width:55.51px"><span style="transform:translateY(1.73px) rotate(0.05deg) scaleX(1.0098)">0</span></div>
<div class="c r" style="left:412.22px;top:252px;width:55.51px"><span style="transform:translateY(1.73px) rotate(0.05deg) scaleX(1.0098)">0</span></div>
<div class="c r" style="left:467.73px;top:252px;width:55.51px"><span style="transform:translateY(1.73px) rotate(0.05deg) scaleX(1.0098)">90</span></div>
<div class="c r" style="left:523.24px;top:252px;width:55.51px"><span style="transform:translateY(1.73px) rotate(0.05deg) scaleX(1.0098)">0</span></div>
<div class="c r" style="left:578.75px;top:252px;width:55.51px"><span style="transform:translateY(1.73px) rotate(0.05deg) scaleX(1.0085)">0,7683</span></div>
<div class="c r" style="left:634.26px;top:252px;width:55.51px"><span style="transform:translateY(1.73px) rotate(0.05deg) scaleX(1.0119)">-90</span></div>
<div class="c r" style="left:689.77px;top:252px;width:55.51px"><span style="transform:translateY(1.73px) rotate(0.05deg) scaleX(1.0098)">0</span></div>
<div class="c" style="left:24.15px;top:269px;width:55.11px"><span style="transform:translateY(1.38px) rotate(0.05deg) scaleX(0.9983);-webkit-text-stroke:0.45px #181818">########</span></div>
<div class="c r" style="left:79.16px;top:269px;width:55.51px"><span style="transform:translateY(1.38px) rotate(0.05deg) scaleX(1.0098)">0</span></div>
<div class="c r" style="left:134.67px;top:269px;width:55.51px"><span style="transform:translateY(1.38px) rotate(0.05deg) scaleX(1.0098)">0</span></div>
<div class="c r" style="left:190.18px;top:269px;width:55.51px"><span style="transform:translateY(1.38px) rotate(0.05deg) scaleX(1.0098)">0</span></div>
<div class="c r" style="left:245.69px;top:269px;width:55.51px"><span style="transform:translateY(1.38px) rotate(0.05deg) scaleX(1.0095)">-9,7472</span></div>
<div class="c r" style="left:301.20px;top:269px;width:55.51px"><span style="transform:translateY(1.38px) rotate(0.05deg) scaleX(1.0098)">1</span></div>
<div class="c r" style="left:356.71px;top:269px;width:55.51px"><span style="transform:translateY(1.38px) rotate(0.05deg) scaleX(1.0098)">0</span></div>
<div class="c r" style="left:412.22px;top:269px;width:55.51px"><span style="transform:translateY(1.38px) rotate(0.05deg) scaleX(1.0098)">0</span></div>
<div class="c r" style="left:467.73px;top:269px;width:55.51px"><span style="transform:translateY(1.38px) rotate(0.05deg) scaleX(1.0098)">90</span></div>
<div class="c r" style="left:523.24px;top:269px;width:55.51px"><span style="transform:translateY(1.38px) rotate(0.05deg) scaleX(1.0098)">0</span></div>
<div class="c r" style="left:578.75px;top:269px;width:55.51px"><span style="transform:translateY(1.38px) rotate(0.05deg) scaleX(1.0085)">0,7683</span></div>
<div class="c r" style="left:634.26px;top:269px;width:55.51px"><span style="transform:translateY(1.38px) rotate(0.05deg) scaleX(1.0119)">-90</span></div>
<div class="c r" style="left:689.77px;top:269px;width:55.51px"><span style="transform:translateY(1.38px) rotate(0.05deg) scaleX(1.0098)">0</span></div>
<div class="c" style="left:24.15px;top:286px;width:55.11px"><span style="transform:translateY(1.03px) rotate(0.05deg) scaleX(0.9983);-webkit-text-stroke:0.45px #181818">########</span></div>
<div class="c r" style="left:79.16px;top:286px;width:55.51px"><span style="transform:translateY(1.03px) rotate(0.05deg) scaleX(1.0098)">0</span></div>
<div class="c r" style="left:134.67px;top:286px;width:55.51px"><span style="transform:translateY(1.03px) rotate(0.05deg) scaleX(1.0098)">0</span></div>
<div class="c r" style="left:190.18px;top:286px;width:55.51px"><span style="transform:translateY(1.03px) rotate(0.05deg) scaleX(1.0098)">0</span></div>
<div class="c r" style="left:245.69px;top:286px;width:55.51px"><span style="transform:translateY(1.03px) rotate(0.05deg) scaleX(1.0095)">-9,7472</span></div>
<div class="c r" style="left:301.20px;top:286px;width:55.51px"><span style="transform:translateY(1.03px) rotate(0.05deg) scaleX(1.0098)">1</span></div>
<div class="c r" style="left:356.71px;top:286px;width:55.51px"><span style="transform:translateY(1.03px) rotate(0.05deg) scaleX(1.0098)">0</span></div>
<div class="c r" style="left:412.22px;top:286px;width:55.51px"><span style="transform:translateY(1.03px) rotate(0.05deg) scaleX(1.0098)">0</span></div>
<div class="c r" style="left:467.73px;top:286px;width:55.51px"><span style="transform:translateY(1.03px) rotate(0.05deg) scaleX(1.0098)">90</span></div>
<div class="c r" style="left:523.24px;top:286px;width:55.51px"><span style="transform:translateY(1.03px) rotate(0.05deg) scaleX(1.0098)">0</span></div>
<div class="c r" style="left:578.75px;top:286px;width:55.51px"><span style="transform:translateY(1.03px) rotate(0.05deg) scaleX(1.0085)">0,7683</span></div>
<div class="c r" style="left:634.26px;top:286px;width:55.51px"><span style="transform:translateY(1.03px) rotate(0.05deg) scaleX(1.0119)">-90</span></div>
<div class="c r" style="left:689.77px;top:286px;width:55.51px"><span style="transform:translateY(1.03px) rotate(0.05deg) scaleX(1.0098)">0</span></div>
<div class="c" style="left:24.15px;top:302px;width:55.11px"><span style="transform:translateY(1.68px) rotate(0.05deg) scaleX(0.9983);-webkit-text-stroke:0.45px #181818">########</span></div>
<div class="c r" style="left:79.16px;top:302px;width:55.51px"><span style="transform:translateY(1.68px) rotate(0.05deg) scaleX(1.0098)">0</span></div>
<div class="c r" style="left:134.67px;top:302px;width:55.51px"><span style="transform:translateY(1.68px) rotate(0.05deg) scaleX(1.0098)">0</span></div>
<div class="c r" style="left:190.18px;top:302px;width:55.51px"><span style="transform:translateY(1.68px) rotate(0.05deg) scaleX(1.0098)">0</span></div>
<div class="c r" style="left:245.69px;top:302px;width:55.51px"><span style="transform:translateY(1.68px) rotate(0.05deg) scaleX(1.0095)">-9,7472</span></div>
<div class="c r" style="left:301.20px;top:302px;width:55.51px"><span style="transform:translateY(1.68px) rotate(0.05deg) scaleX(1.0098)">1</span></div>
<div class="c r" style="left:356.71px;top:302px;width:55.51px"><span style="transform:translateY(1.68px) rotate(0.05deg) scaleX(1.0098)">0</span></div>
<div class="c r" style="left:412.22px;top:302px;width:55.51px"><span style="transform:translateY(1.68px) rotate(0.05deg) scaleX(1.0098)">0</span></div>
<div class="c r" style="left:467.73px;top:302px;width:55.51px"><span style="transform:translateY(1.68px) rotate(0.05deg) scaleX(1.0098)">90</span></div>
<div class="c r" style="left:523.24px;top:302px;width:55.51px"><span style="transform:translateY(1.68px) rotate(0.05deg) scaleX(1.0098)">0</span></div>
<div class="c r" style="left:578.75px;top:302px;width:55.51px"><span style="transform:translateY(1.68px) rotate(0.05deg) scaleX(1.0085)">0,7683</span></div>
<div class="c r" style="left:634.26px;top:302px;width:55.51px"><span style="transform:translateY(1.68px) rotate(0.05deg) scaleX(1.0119)">-90</span></div>
<div class="c r" style="left:689.77px;top:302px;width:55.51px"><span style="transform:translateY(1.68px) rotate(0.05deg) scaleX(1.0098)">0</span></div>
<div class="c" style="left:24.15px;top:319px;width:55.11px"><span style="transform:translateY(1.34px) rotate(0.05deg) scaleX(0.9983);-webkit-text-stroke:0.45px #181818">########</span></div>
<div class="c r" style="left:79.16px;top:319px;width:55.51px"><span style="transform:translateY(1.34px) rotate(0.05deg) scaleX(1.0098)">0</span></div>
<div class="c r" style="left:134.67px;top:319px;width:55.51px"><span style="transform:translateY(1.34px) rotate(0.05deg) scaleX(1.0098)">0</span></div>
<div class="c r" style="left:190.18px;top:319px;width:55.51px"><span style="transform:translateY(1.34px) rotate(0.05deg) scaleX(1.0098)">0</span></div>
<div class="c r" style="left:245.69px;top:319px;width:55.51px"><span style="transform:translateY(1.34px) rotate(0.05deg) scaleX(1.0095)">-9,7472</span></div>
<div class="c r" style="left:301.20px;top:319px;width:55.51px"><span style="transform:translateY(1.34px) rotate(0.05deg) scaleX(1.0098)">1</span></div>
<div class="c r" style="left:356.71px;top:319px;width:55.51px"><span style="transform:translateY(1.34px) rotate(0.05deg) scaleX(1.0098)">0</span></div>
<div class="c r" style="left:412.22px;top:319px;width:55.51px"><span style="transform:translateY(1.34px) rotate(0.05deg) scaleX(1.0098)">0</span></div>
<div class="c r" style="left:467.73px;top:319px;width:55.51px"><span style="transform:translateY(1.34px) rotate(0.05deg) scaleX(1.0098)">90</span></div>
<div class="c r" style="left:523.24px;top:319px;width:55.51px"><span style="transform:translateY(1.34px) rotate(0.05deg) scaleX(1.0098)">0</span></div>
<div class="c r" style="left:578.75px;top:319px;width:55.51px"><span style="transform:translateY(1.34px) rotate(0.05deg) scaleX(1.0085)">0,7683</span></div>
<div class="c r" style="left:634.26px;top:319px;width:55.51px"><span style="transform:translateY(1.34px) rotate(0.05deg) scaleX(1.0119)">-90</span></div>
<div class="c r" style="left:689.77px;top:319px;width:55.51px"><span style="transform:translateY(1.34px) rotate(0.05deg) scaleX(1.0098)">0</span></div>
<div class="c" style="left:24.15px;top:336px;width:55.11px"><span style="transform:translateY(0.99px) rotate(0.05deg) scaleX(0.9983);-webkit-text-stroke:0.45px #181818">########</span></div>
<div class="c r" style="left:79.16px;top:336px;width:55.51px"><span style="transform:translateY(0.99px) rotate(0.05deg) scaleX(1.0098)">0</span></div>
<div class="c r" style="left:134.67px;top:336px;width:55.51px"><span style="transform:translateY(0.99px) rotate(0.05deg) scaleX(1.0098)">0</span></div>
<div class="c r" style="left:190.18px;top:336px;width:55.51px"><span style="transform:translateY(0.99px) rotate(0.05deg) scaleX(1.0098)">0</span></div>
<div class="c r" style="left:245.69px;top:336px;width:55.51px"><span style="transform:translateY(0.99px) rotate(0.05deg) scaleX(1.0095)">-9,7472</span></div>
<div class="c r" style="left:301.20px;top:336px;width:55.51px"><span style="transform:translateY(0.99px) rotate(0.05deg) scaleX(1.0098)">1</span></div>
<div class="c r" style="left:356.71px;top:336px;width:55.51px"><span style="transform:translateY(0.99px) rotate(0.05deg) scaleX(1.0098)">0</span></div>
<div class="c r" style="left:412.22px;top:336px;width:55.51px"><span style="transform:translateY(0.99px) rotate(0.05deg) scaleX(1.0098)">0</span></div>
<div class="c r" style="left:467.73px;top:336px;width:55.51px"><span style="transform:translateY(0.99px) rotate(0.05deg) scaleX(1.0098)">90</span></div>
<div class="c r" style="left:523.24px;top:336px;width:55.51px"><span style="transform:translateY(0.99px) rotate(0.05deg) scaleX(1.0098)">0</span></div>
<div class="c r" style="left:578.75px;top:336px;width:55.51px"><span style="transform:translateY(0.99px) rotate(0.05deg) scaleX(1.0085)">0,7683</span></div>
<div class="c r" style="left:634.26px;top:336px;width:55.51px"><span style="transform:translateY(0.99px) rotate(0.05deg) scaleX(1.0119)">-90</span></div>
<div class="c r" style="left:689.77px;top:336px;width:55.51px"><span style="transform:translateY(0.99px) rotate(0.05deg) scaleX(1.0098)">0</span></div>
<div class="c" style="left:24.15px;top:352px;width:55.11px"><span style="transform:translateY(1.64px) rotate(0.05deg) scaleX(0.9983);-webkit-text-stroke:0.45px #181818">########</span></div>
<div class="c r" style="left:79.16px;top:352px;width:55.51px"><span style="transform:translateY(1.64px) rotate(0.05deg) scaleX(1.0098)">0</span></div>
<div class="c r" style="left:134.67px;top:352px;width:55.51px"><span style="transform:translateY(1.64px) rotate(0.05deg) scaleX(1.0098)">0</span></div>
<div class="c r" style="left:190.18px;top:352px;width:55.51px"><span style="transform:translateY(1.64px) rotate(0.05deg) scaleX(1.0098)">0</span></div>
<div class="c r" style="left:245.69px;top:352px;width:55.51px"><span style="transform:translateY(1.64px) rotate(0.05deg) scaleX(1.0095)">-9,7472</span></div>
<div class="c r" style="left:301.20px;top:352px;width:55.51px"><span style="transform:translateY(1.64px) rotate(0.05deg) scaleX(1.0098)">1</span></div>
<div class="c r" style="left:356.71px;top:352px;width:55.51px"><span style="transform:translateY(1.64px) rotate(0.05deg) scaleX(1.0098)">0</span></div>
<div class="c r" style="left:412.22px;top:352px;width:55.51px"><span style="transform:translateY(1.64px) rotate(0.05deg) scaleX(1.0098)">0</span></div>
<div class="c r" style="left:467.73px;top:352px;width:55.51px"><span style="transform:translateY(1.64px) rotate(0.05deg) scaleX(1.0098)">90</span></div>
<div class="c r" style="left:523.24px;top:352px;width:55.51px"><span style="transform:translateY(1.64px) rotate(0.05deg) scaleX(1.0098)">0</span></div>
<div class="c r" style="left:578.75px;top:352px;width:55.51px"><span style="transform:translateY(1.64px) rotate(0.05deg) scaleX(1.0085)">0,7683</span></div>
<div class="c r" style="left:634.26px;top:352px;width:55.51px"><span style="transform:translateY(1.64px) rotate(0.05deg) scaleX(1.0119)">-90</span></div>
<div class="c r" style="left:689.77px;top:352px;width:55.51px"><span style="transform:translateY(1.64px) rotate(0.05deg) scaleX(1.0098)">0</span></div>
<div class="c" style="left:24.15px;top:369px;width:55.11px"><span style="transform:translateY(1.29px) rotate(0.05deg) scaleX(0.9983);-webkit-text-stroke:0.45px #181818">########</span></div>
<div class="c r" style="left:79.16px;top:369px;width:55.51px"><span style="transform:translateY(1.29px) rotate(0.05deg) scaleX(1.0599)">111,43</span></div>
<div class="c r" style="left:134.67px;top:369px;width:55.51px"><span style="transform:translateY(1.29px) rotate(0.05deg) scaleX(1.0085)">70,604</span></div>
<div class="c r" style="left:190.18px;top:369px;width:55.51px"><span style="transform:translateY(1.29px) rotate(0.05deg) scaleX(1.0085)">479,75</span></div>
<div class="c r" style="left:245.69px;top:369px;width:55.51px"><span style="transform:translateY(1.29px) rotate(0.05deg) scaleX(1.0085)">453,59</span></div>
<div class="c r" style="left:301.20px;top:369px;width:55.51px"><span style="transform:translateY(1.29px) rotate(0.05deg) scaleX(1.0085)">0,4331</span></div>
<div class="c r" style="left:356.71px;top:369px;width:55.51px"><span style="transform:translateY(1.29px) rotate(0.05deg) scaleX(1.0085)">4,6007</span></div>
<div class="c r" style="left:412.22px;top:369px;width:55.51px"><span style="transform:translateY(1.29px) rotate(0.05deg) scaleX(1.0095)">-53,222</span></div>
<div class="c r" style="left:467.73px;top:369px;width:55.51px"><span style="transform:translateY(1.29px) rotate(0.05deg) scaleX(1.0085)">77,235</span></div>
<div class="c r" style="left:523.24px;top:369px;width:55.51px"><span style="transform:translateY(1.29px) rotate(0.05deg) scaleX(1.0085)">5,4368</span></div>
<div class="c r" style="left:578.75px;top:369px;width:55.51px"><span style="transform:translateY(1.29px) rotate(0.05deg) scaleX(1.0085)">9,6928</span></div>
<div class="c r" style="left:634.26px;top:369px;width:55.51px"><span style="transform:translateY(1.29px) rotate(0.05deg) scaleX(1.0095)">-85,497</span></div>
<div class="c r" style="left:689.77px;top:369px;width:55.51px"><span style="transform:translateY(1.29px) rotate(0.05deg) scaleX(1.0095)">-9,6626</span></div>
<div class="c" style="left:24.15px;top:386px;width:55.11px"><span style="transform:translateY(0.94px) rotate(0.05deg) scaleX(0.9983);-webkit-text-stroke:0.45px #181818">########</span></div>
<div class="c r" style="left:79.16px;top:386px;width:55.51px"><span style="transform:translateY(0.94px) rotate(0.05deg) scaleX(1.0085)">470,78</span></div>
<div class="c r" style="left:134.67px;top:386px;width:55.51px"><span style="transform:translateY(0.94px) rotate(0.05deg) scaleX(1.0082)">422,2</span></div>
<div class="c r" style="left:190.18px;top:386px;width:55.51px"><span style="transform:translateY(0.94px) rotate(0.05deg) scaleX(1.0085)">2320,9</span></div>
<div class="c r" style="left:245.69px;top:386px;width:55.51px"><span style="transform:translateY(0.94px) rotate(0.05deg) scaleX(1.0085)">2271,5</span></div>
<div class="c r" style="left:301.20px;top:386px;width:55.51px"><span style="transform:translateY(0.94px) rotate(0.05deg) scaleX(1.0085)">0,5134</span></div>
<div class="c r" style="left:356.71px;top:386px;width:55.51px"><span style="transform:translateY(0.94px) rotate(0.05deg) scaleX(1.0085)">12,685</span></div>
<div class="c r" style="left:412.22px;top:386px;width:55.51px"><span style="transform:translateY(0.94px) rotate(0.05deg) scaleX(1.0095)">-42,166</span></div>
<div class="c r" style="left:467.73px;top:386px;width:55.51px"><span style="transform:translateY(0.94px) rotate(0.05deg) scaleX(1.0085)">54,948</span></div>
<div class="c r" style="left:523.24px;top:386px;width:55.51px"><span style="transform:translateY(0.94px) rotate(0.05deg) scaleX(1.0085)">18,201</span></div>
<div class="c r" style="left:578.75px;top:386px;width:55.51px"><span style="transform:translateY(0.94px) rotate(0.05deg) scaleX(1.0085)">36,577</span></div>
<div class="c r" style="left:634.26px;top:386px;width:55.51px"><span style="transform:translateY(0.94px) rotate(0.05deg) scaleX(1.0095)">-88,965</span></div>
<div class="c r" style="left:689.77px;top:386px;width:55.51px"><span style="transform:translateY(0.94px) rotate(0.05deg) scaleX(1.0094)">-36,57</span></div>
<div class="c" style="left:24.15px;top:402px;width:55.11px"><span style="transform:translateY(1.60px) rotate(0.05deg) scaleX(0.9983);-webkit-text-stroke:0.45px #181818">########</span></div>
<div class="c r" style="left:79.16px;top:402px;width:55.51px"><span style="transform:translateY(1.60px) rotate(0.05deg) scaleX(1.0085)">513,01</span></div>
<div class="c r" style="left:134.67px;top:402px;width:55.51px"><span style="transform:translateY(1.60px) rotate(0.05deg) scaleX(1.0085)">473,77</span></div>
<div class="c r" style="left:190.18px;top:402px;width:55.51px"><span style="transform:translateY(1.60px) rotate(0.05deg) scaleX(1.0085)">4598,7</span></div>
<div class="c r" style="left:245.69px;top:402px;width:55.51px"><span style="transform:translateY(1.60px) rotate(0.05deg) scaleX(1.0085)">4514,4</span></div>
<div class="c r" style="left:301.20px;top:402px;width:55.51px"><span style="transform:translateY(1.60px) rotate(0.05deg) scaleX(1.0085)">0,9363</span></div>
<div class="c r" style="left:356.71px;top:402px;width:55.51px"><span style="transform:translateY(1.60px) rotate(0.05deg) scaleX(1.0085)">19,197</span></div>
<div class="c r" style="left:412.22px;top:402px;width:55.51px"><span style="transform:translateY(1.60px) rotate(0.05deg) scaleX(1.0095)">-29,483</span></div>
<div class="c r" style="left:467.73px;top:402px;width:55.51px"><span style="transform:translateY(1.60px) rotate(0.05deg) scaleX(1.0085)">54,853</span></div>
<div class="c r" style="left:523.24px;top:402px;width:55.51px"><span style="transform:translateY(1.60px) rotate(0.05deg) scaleX(1.0085)">34,799</span></div>
<div class="c r" style="left:578.75px;top:402px;width:55.51px"><span style="transform:translateY(1.60px) rotate(0.05deg) scaleX(1.0085)">52,833</span></div>
<div class="c r" style="left:634.26px;top:402px;width:55.51px"><span style="transform:translateY(1.60px) rotate(0.05deg) scaleX(1.0095)">-89,417</span></div>
<div class="c r" style="left:689.77px;top:402px;width:55.51px"><span style="transform:translateY(1.60px) rotate(0.05deg) scaleX(1.0095)">-52,829</span></div>
<div class="c" style="left:24.15px;top:419px;width:55.11px"><span style="transform:translateY(1.25px) rotate(0.05deg) scaleX(0.9983);-webkit-text-stroke:0.45px #181818">########</span></div>
<div class="c r" style="left:79.16px;top:419px;width:55.51px"><span style="transform:translateY(1.25px) rotate(0.05deg) scaleX(1.0085)">497,44</span></div>
<div class="c r" style="left:134.67px;top:419px;width:55.51px"><span style="transform:translateY(1.25px) rotate(0.05deg) scaleX(1.0085)">455,55</span></div>
<div class="c r" style="left:190.18px;top:419px;width:55.51px"><span style="transform:translateY(1.25px) rotate(0.05deg) scaleX(1.0085)">4378,9</span></div>
<div class="c r" style="left:245.69px;top:419px;width:55.51px"><span style="transform:translateY(1.25px) rotate(0.05deg) scaleX(1.0085)">4298,6</span></div>
<div class="c r" style="left:301.20px;top:419px;width:55.51px"><span style="transform:translateY(1.25px) rotate(0.05deg) scaleX(1.0085)">0,9194</span></div>
<div class="c r" style="left:356.71px;top:419px;width:55.51px"><span style="transform:translateY(1.25px) rotate(0.05deg) scaleX(1.0085)">23,445</span></div>
<div class="c r" style="left:412.22px;top:419px;width:55.51px"><span style="transform:translateY(1.25px) rotate(0.05deg) scaleX(1.0094)">-15,36</span></div>
<div class="c r" style="left:467.73px;top:419px;width:55.51px"><span style="transform:translateY(1.25px) rotate(0.05deg) scaleX(1.0085)">61,558</span></div>
<div class="c r" style="left:523.24px;top:419px;width:55.51px"><span style="transform:translateY(1.25px) rotate(0.05deg) scaleX(1.0085)">56,617</span></div>
<div class="c r" style="left:578.75px;top:419px;width:55.51px"><span style="transform:translateY(1.25px) rotate(0.05deg) scaleX(1.0085)">31,683</span></div>
<div class="c r" style="left:634.26px;top:419px;width:55.51px"><span style="transform:translateY(1.25px) rotate(0.05deg) scaleX(1.0095)">-88,755</span></div>
<div class="c r" style="left:689.77px;top:419px;width:55.51px"><span style="transform:translateY(1.25px) rotate(0.05deg) scaleX(1.0095)">-31,674</span></div>
<div class="c" style="left:24.15px;top:436px;width:55.11px"><span style="transform:translateY(0.90px) rotate(0.05deg) scaleX(0.9983);-webkit-text-stroke:0.45px #181818">########</span></div>
<div class="c r" style="left:79.16px;top:436px;width:55.51px"><span style="transform:translateY(0.90px) rotate(0.05deg) scaleX(1.0082)">452,4</span></div>
<div class="c r" style="left:134.67px;top:436px;width:55.51px"><span style="transform:translateY(0.90px) rotate(0.05deg) scaleX(1.0085)">413,34</span></div>
<div class="c r" style="left:190.18px;top:436px;width:55.51px"><span style="transform:translateY(0.90px) rotate(0.05deg) scaleX(1.0098)">3959</span></div>
<div class="c r" style="left:245.69px;top:436px;width:55.51px"><span style="transform:translateY(0.90px) rotate(0.05deg) scaleX(1.0085)">3886,1</span></div>
<div class="c r" style="left:301.20px;top:436px;width:55.51px"><span style="transform:translateY(0.90px) rotate(0.05deg) scaleX(1.0085)">0,9139</span></div>
<div class="c r" style="left:356.71px;top:436px;width:55.51px"><span style="transform:translateY(0.90px) rotate(0.05deg) scaleX(1.0085)">24,963</span></div>
<div class="c r" style="left:412.22px;top:436px;width:55.51px"><span style="transform:translateY(0.90px) rotate(0.05deg) scaleX(1.0095)">-0,2952</span></div>
<div class="c r" style="left:467.73px;top:436px;width:55.51px"><span style="transform:translateY(0.90px) rotate(0.05deg) scaleX(1.0085)">64,284</span></div>
<div class="c r" style="left:523.24px;top:436px;width:55.51px"><span style="transform:translateY(0.90px) rotate(0.05deg) scaleX(1.0082)">58,39</span></div>
<div class="c r" style="left:578.75px;top:436px;width:55.51px"><span style="transform:translateY(0.90px) rotate(0.05deg) scaleX(1.0085)">2,7267</span></div>
<div class="c r" style="left:634.26px;top:436px;width:55.51px"><span style="transform:translateY(0.90px) rotate(0.05deg) scaleX(1.0095)">-73,646</span></div>
<div class="c r" style="left:689.77px;top:436px;width:55.51px"><span style="transform:translateY(0.90px) rotate(0.05deg) scaleX(1.0095)">-2,6163</span></div>
<div class="c" style="left:24.15px;top:452px;width:55.11px"><span style="transform:translateY(1.55px) rotate(0.05deg) scaleX(0.9983);-webkit-text-stroke:0.45px #181818">########</span></div>
<div class="c r" style="left:79.16px;top:452px;width:55.51px"><span style="transform:translateY(1.55px) rotate(0.05deg) scaleX(1.0336)">411,02</span></div>
<div class="c r" style="left:134.67px;top:452px;width:55.51px"><span style="transform:translateY(1.55px) rotate(0.05deg) scaleX(1.0085)">378,71</span></div>
<div class="c r" style="left:190.18px;top:452px;width:55.51px"><span style="transform:translateY(1.55px) rotate(0.05deg) scaleX(1.0085)">3641,6</span></div>
<div class="c r" style="left:245.69px;top:452px;width:55.51px"><span style="transform:translateY(1.55px) rotate(0.05deg) scaleX(1.0085)">3573,8</span></div>
<div class="c r" style="left:301.20px;top:452px;width:55.51px"><span style="transform:translateY(1.55px) rotate(0.05deg) scaleX(1.0085)">0,9251</span></div>
<div class="c r" style="left:356.71px;top:452px;width:55.51px"><span style="transform:translateY(1.55px) rotate(0.05deg) scaleX(1.0085)">23,557</span></div>
<div class="c r" style="left:412.22px;top:452px;width:55.51px"><span style="transform:translateY(1.55px) rotate(0.05deg) scaleX(1.0085)">14,789</span></div>
<div class="c r" style="left:467.73px;top:452px;width:55.51px"><span style="transform:translateY(1.55px) rotate(0.05deg) scaleX(1.0085)">61,746</span></div>
<div class="c r" style="left:523.24px;top:452px;width:55.51px"><span style="transform:translateY(1.55px) rotate(0.05deg) scaleX(1.0085)">57,479</span></div>
<div class="c r" style="left:578.75px;top:452px;width:55.51px"><span style="transform:translateY(1.55px) rotate(0.05deg) scaleX(1.0085)">29,632</span></div>
<div class="c r" style="left:634.26px;top:452px;width:55.51px"><span style="transform:translateY(1.55px) rotate(0.05deg) scaleX(1.0085)">88,649</span></div>
<div class="c r" style="left:689.77px;top:452px;width:55.51px"><span style="transform:translateY(1.55px) rotate(0.05deg) scaleX(1.0085)">29,623</span></div>
<div class="c" style="left:24.15px;top:469px;width:55.11px"><span style="transform:translateY(1.20px) rotate(0.05deg) scaleX(0.9983);-webkit-text-stroke:0.45px #181818">########</span></div>
<div class="c r" style="left:79.16px;top:469px;width:55.51px"><span style="transform:translateY(1.20px) rotate(0.05deg) scaleX(1.0085)">541,79</span></div>
<div class="c r" style="left:134.67px;top:469px;width:55.51px"><span style="transform:translateY(1.20px) rotate(0.05deg) scaleX(1.0085)">506,49</span></div>
<div class="c r" style="left:190.18px;top:469px;width:55.51px"><span style="transform:translateY(1.20px) rotate(0.05deg) scaleX(1.0085)">4865,7</span></div>
<div class="c r" style="left:245.69px;top:469px;width:55.51px"><span style="transform:translateY(1.20px) rotate(0.05deg) scaleX(1.0085)">4776,8</span></div>
<div class="c r" style="left:301.20px;top:469px;width:55.51px"><span style="transform:translateY(1.20px) rotate(0.05deg) scaleX(1.0085)">0,9381</span></div>
<div class="c r" style="left:356.71px;top:469px;width:55.51px"><span style="transform:translateY(1.20px) rotate(0.05deg) scaleX(1.0085)">19,407</span></div>
<div class="c r" style="left:412.22px;top:469px;width:55.51px"><span style="transform:translateY(1.20px) rotate(0.05deg) scaleX(1.0085)">28,961</span></div>
<div class="c r" style="left:467.73px;top:469px;width:55.51px"><span style="transform:translateY(1.20px) rotate(0.05deg) scaleX(1.0085)">55,155</span></div>
<div class="c r" style="left:523.24px;top:469px;width:55.51px"><span style="transform:translateY(1.20px) rotate(0.05deg) scaleX(1.0085)">35,549</span></div>
<div class="c r" style="left:578.75px;top:469px;width:55.51px"><span style="transform:translateY(1.20px) rotate(0.05deg) scaleX(1.0082)">53,07</span></div>
<div class="c r" style="left:634.26px;top:469px;width:55.51px"><span style="transform:translateY(1.20px) rotate(0.05deg) scaleX(1.0085)">89,422</span></div>
<div class="c r" style="left:689.77px;top:469px;width:55.51px"><span style="transform:translateY(1.20px) rotate(0.05deg) scaleX(1.0085)">53,067</span></div>
<div class="c" style="left:24.15px;top:486px;width:55.11px"><span style="transform:translateY(0.86px) rotate(0.05deg) scaleX(0.9983);-webkit-text-stroke:0.45px #181818">########</span></div>
<div class="c r" style="left:79.16px;top:486px;width:55.51px"><span style="transform:translateY(0.86px) rotate(0.05deg) scaleX(1.0085)">456,93</span></div>
<div class="c r" style="left:134.67px;top:486px;width:55.51px"><span style="transform:translateY(0.86px) rotate(0.05deg) scaleX(1.0085)">433,98</span></div>
<div class="c r" style="left:190.18px;top:486px;width:55.51px"><span style="transform:translateY(0.86px) rotate(0.05deg) scaleX(1.0085)">4244,9</span></div>
<div class="c r" style="left:245.69px;top:486px;width:55.51px"><span style="transform:translateY(0.86px) rotate(0.05deg) scaleX(1.0085)">4167,1</span></div>
<div class="c r" style="left:301.20px;top:486px;width:55.51px"><span style="transform:translateY(0.86px) rotate(0.05deg) scaleX(1.0085)">0,9703</span></div>
<div class="c r" style="left:356.71px;top:486px;width:55.51px"><span style="transform:translateY(0.86px) rotate(0.05deg) scaleX(1.0085)">12,973</span></div>
<div class="c r" style="left:412.22px;top:486px;width:55.51px"><span style="transform:translateY(0.86px) rotate(0.05deg) scaleX(1.0085)">41,703</span></div>
<div class="c r" style="left:467.73px;top:486px;width:55.51px"><span style="transform:translateY(0.86px) rotate(0.05deg) scaleX(1.0085)">54,074</span></div>
<div class="c r" style="left:523.24px;top:486px;width:55.51px"><span style="transform:translateY(0.86px) rotate(0.05deg) scaleX(1.0085)">18,772</span></div>
<div class="c r" style="left:578.75px;top:486px;width:55.51px"><span style="transform:translateY(0.86px) rotate(0.05deg) scaleX(1.0085)">38,484</span></div>
<div class="c r" style="left:634.26px;top:486px;width:55.51px"><span style="transform:translateY(0.86px) rotate(0.05deg) scaleX(1.0085)">89,033</span></div>
<div class="c r" style="left:689.77px;top:486px;width:55.51px"><span style="transform:translateY(0.86px) rotate(0.05deg) scaleX(1.0085)">38,477</span></div>
<div class="c" style="left:24.15px;top:502px;width:55.11px"><span style="transform:translateY(1.51px) rotate(0.05deg) scaleX(0.9983);-webkit-text-stroke:0.45px #181818">########</span></div>
<div class="c r" style="left:79.16px;top:502px;width:55.51px"><span style="transform:translateY(1.51px) rotate(0.05deg) scaleX(1.0085)">83,492</span></div>
<div class="c r" style="left:134.67px;top:502px;width:55.51px"><span style="transform:translateY(1.51px) rotate(0.05deg) scaleX(1.0085)">64,812</span></div>
<div class="c r" style="left:190.18px;top:502px;width:55.51px"><span style="transform:translateY(1.51px) rotate(0.05deg) scaleX(1.0085)">576,43</span></div>
<div class="c r" style="left:245.69px;top:502px;width:55.51px"><span style="transform:translateY(1.51px) rotate(0.05deg) scaleX(1.0085)">549,76</span></div>
<div class="c r" style="left:301.20px;top:502px;width:55.51px"><span style="transform:translateY(1.51px) rotate(0.05deg) scaleX(1.0085)">0,7006</span></div>
<div class="c r" style="left:356.71px;top:502px;width:55.51px"><span style="transform:translateY(1.51px) rotate(0.05deg) scaleX(1.0085)">4,7967</span></div>
<div class="c r" style="left:412.22px;top:502px;width:55.51px"><span style="transform:translateY(1.51px) rotate(0.05deg) scaleX(1.0085)">52,987</span></div>
<div class="c r" style="left:467.73px;top:502px;width:55.51px"><span style="transform:translateY(1.51px) rotate(0.05deg) scaleX(1.0085)">76,726</span></div>
<div class="c r" style="left:523.24px;top:502px;width:55.51px"><span style="transform:translateY(1.51px) rotate(0.05deg) scaleX(1.0085)">5,6948</span></div>
<div class="c r" style="left:578.75px;top:502px;width:55.51px"><span style="transform:translateY(1.51px) rotate(0.05deg) scaleX(1.0336)">10,116</span></div>
<div class="c r" style="left:634.26px;top:502px;width:55.51px"><span style="transform:translateY(1.51px) rotate(0.05deg) scaleX(1.0085)">85,689</span></div>
<div class="c r" style="left:689.77px;top:502px;width:55.51px"><span style="transform:translateY(1.51px) rotate(0.05deg) scaleX(1.0085)">10,087</span></div>
<div class="c" style="left:24.15px;top:519px;width:55.11px"><span style="transform:translateY(1.16px) rotate(0.05deg) scaleX(0.9983);-webkit-text-stroke:0.45px #181818">########</span></div>
<div class="c r" style="left:79.16px;top:519px;width:55.51px"><span style="transform:translateY(1.16px) rotate(0.05deg) scaleX(1.0098)">0</span></div>
<div class="c r" style="left:134.67px;top:519px;width:55.51px"><span style="transform:translateY(1.16px) rotate(0.05deg) scaleX(1.0098)">0</span></div>
<div class="c r" style="left:190.18px;top:519px;width:55.51px"><span style="transform:translateY(1.16px) rotate(0.05deg) scaleX(1.0098)">0</span></div>
<div class="c r" style="left:245.69px;top:519px;width:55.51px"><span style="transform:translateY(1.16px) rotate(0.05deg) scaleX(1.0095)">-9,7472</span></div>
<div class="c r" style="left:301.20px;top:519px;width:55.51px"><span style="transform:translateY(1.16px) rotate(0.05deg) scaleX(1.0098)">1</span></div>
<div class="c r" style="left:356.71px;top:519px;width:55.51px"><span style="transform:translateY(1.16px) rotate(0.05deg) scaleX(1.0085)">0,3138</span></div>
<div class="c r" style="left:412.22px;top:519px;width:55.51px"><span style="transform:translateY(1.16px) rotate(0.05deg) scaleX(1.0085)">58,165</span></div>
<div class="c r" style="left:467.73px;top:519px;width:55.51px"><span style="transform:translateY(1.16px) rotate(0.05deg) scaleX(1.0098)">90</span></div>
<div class="c r" style="left:523.24px;top:519px;width:55.51px"><span style="transform:translateY(1.16px) rotate(0.05deg) scaleX(1.0085)">178,75</span></div>
<div class="c r" style="left:578.75px;top:519px;width:55.51px"><span style="transform:translateY(1.16px) rotate(0.05deg) scaleX(1.0085)">0,7683</span></div>
<div class="c r" style="left:634.26px;top:519px;width:55.51px"><span style="transform:translateY(1.16px) rotate(0.05deg) scaleX(1.0119)">-90</span></div>
<div class="c r" style="left:689.77px;top:519px;width:55.51px"><span style="transform:translateY(1.16px) rotate(0.05deg) scaleX(1.0098)">0</span></div>
</div>
</body></html>
